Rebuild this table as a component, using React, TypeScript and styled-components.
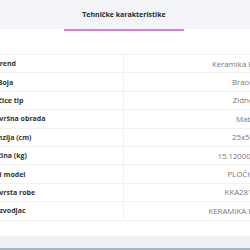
import React from 'react'
import styled, { createGlobalStyle } from 'styled-components'

const GlobalStyle = createGlobalStyle`
  html, body {
    margin: 0;
    padding: 0;
    background: #fff;
    overflow: hidden;
    font-family: 'Open Sans', 'Liberation Sans', sans-serif;
  }
`

const Page = styled.div`
  width: 100vw;
  height: 100vh;
  overflow: hidden;
  display: flex;
  flex-direction: column;
`

const TabBar = styled.div`
  height: 29px;
  flex-shrink: 0;
  background: #f2f4f7;
  display: flex;
  justify-content: center;
`

const Tab = styled.div`
  width: 120px;
  height: 29px;
  margin-right: 2px;
  border-bottom: 2px solid #d77fd2;
  display: flex;
  align-items: center;
  justify-content: center;
  font-size: 7px;
  font-weight: 700;
  color: #222d3b;
  white-space: nowrap;
`

const Content = styled.div`
  padding-top: 25px;
  display: flex;
  justify-content: center;
`

const Table = styled.div`
  flex-shrink: 0;
  display: flex;
  flex-direction: column;
  border-top: 1px solid #f1f1f1;
`

const Row = styled.div`
  display: grid;
  grid-template-columns: 236px 238px;
  height: 18.4px;
  box-sizing: border-box;
  border-bottom: 1px solid #f1f1f1;
`

const Cell = styled.div<{ $label?: boolean }>`
  display: flex;
  align-items: center;
  justify-content: center;
  white-space: nowrap;
  font-size: ${(p) => (p.$label ? '7px' : '7.8px')};
  font-weight: ${(p) => (p.$label ? 700 : 400)};
  color: ${(p) => (p.$label ? '#333' : '#777')};
  border-right: ${(p) => (p.$label ? '1px solid #f1f1f1' : 'none')};
`

const Footer = styled.div`
  margin-top: 15px;
  height: 12px;
  flex-shrink: 0;
  background: #eef2f5;
  border-bottom: 2px solid #a7b6bc;
`

const specs: [string, string][] = [
  ['Brend', 'Keramika Kanjiža'],
  ['Boja', 'Braon'],
  ['Pločice tip', 'Zidne'],
  ['Izgled i završna obrada', 'Mat'],
  ['Dimenzija (cm)', '25x50'],
  ['Količina (kg)', '15.120000000'],
  ['Novi model', 'PLOČICE'],
  ['Grupa vrsta robe', 'KKA28105'],
  ['Proizvodjac', 'KERAMIKA KANJIŽA'],
]

export default function App() {
  return (
    <Page>
      <GlobalStyle />
      <TabBar>
        <Tab>Tehničke karakteristike</Tab>
      </TabBar>
      <Content>
        <Table>
          {specs.map(([label, value]) => (
            <Row key={label}>
              <Cell $label>{label}</Cell>
              <Cell>{value}</Cell>
            </Row>
          ))}
        </Table>
      </Content>
      <Footer />
    </Page>
  )
}
